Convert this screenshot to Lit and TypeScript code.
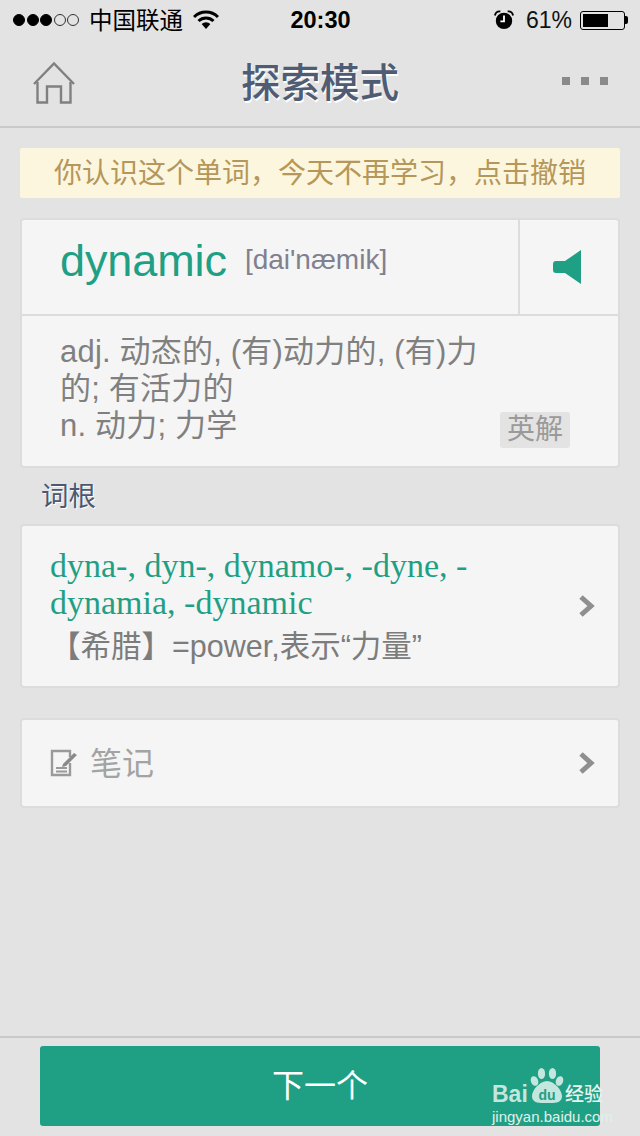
import { LitElement, html, css } from "lit";
import { customElement } from "lit/decorators.js";

const chev = html`<svg class="chev" width="18" height="24" viewBox="0 0 18 24"><path d="M3 3 L13 12 L3 21" fill="none" stroke="#8f8f8f" stroke-width="5"/></svg>`;

@customElement("app-root")
export class AppRoot extends LitElement {
  static styles = css`
    :host { display: block; position: relative; width: 640px; height: 1136px; overflow: hidden; background: #e3e3e3;
      font-family: "Liberation Sans", "Noto Sans CJK SC", sans-serif; }
    .page { display: flex; flex-direction: column; height: 1136px; }
    .status { height: 40px; flex: none; display: grid; grid-template-columns: 1fr auto 1fr; align-items: center; color: #000; font-size: 24px; padding: 0 12px 0 13px; }
    .status-l { display: flex; align-items: center; }
    .dots { display: flex; gap: 1.5px; margin-right: 10px; }
    .dot { box-sizing: border-box; width: 12px; height: 12px; border-radius: 50%; background: #000; border: 1px solid #000; }
    .dot.off { background: none; border-color: #333; }
    .carrier { font-size: 23.5px; margin-right: 10px; padding-bottom: 3px; }
    .time { font-size: 23.5px; font-weight: 700; }
    .status-r { display: flex; justify-content: flex-end; align-items: center; gap: 8px; font-size: 23px; color: #111; }
    .alarm { margin-right: 4px; }
    .batt { display: flex; align-items: center; }
    .batt-body { box-sizing: content-box; width: 39px; height: 13px; border: 1px solid #000; border-radius: 3px; padding: 2px; display: flex; }
    .batt-fill { width: 25px; background: #000; }
    .batt-tip { width: 3px; height: 8px; background: #000; border-radius: 0 2px 2px 0; }
    .nav { height: 86px; flex: none; border-bottom: 2px solid #c9c9c9; display: grid; grid-template-columns: 1fr auto 1fr; align-items: center; padding: 0 32px; }
    .nav-home { display: flex; }
    .title { font-size: 39.5px; font-weight: 500; color: #505c74; text-shadow: 1px 2px 0 #fff; padding-bottom: 8px; }
    .more { display: flex; justify-content: flex-end; gap: 11px; padding-bottom: 4px; }
    .more i { width: 8px; height: 8px; background: #8a8a8a; display: block; }
    .content { flex: 1; padding: 20px 20px 0; display: flex; flex-direction: column; }
    .banner { height: 50px; box-sizing: border-box; padding-bottom: 4px; background: #fcf6de; border-radius: 2px; color: #b5975a; font-size: 28px; display: flex; align-items: center; justify-content: center; }
    .card { background: #f5f5f5; border: 2px solid #dcdcdc; border-radius: 4px; }
    .word-card { margin-top: 20px; height: 250px; box-sizing: border-box; display: flex; flex-direction: column; }
    .word-head { height: 94px; flex: none; display: flex; border-bottom: 2px solid #dcdcdc; }
    .word-main { flex: 1; display: flex; align-items: flex-start; padding-left: 38px; gap: 18px; }
    .word { font-size: 45px; letter-spacing: -0.1px; color: #1f9f84; margin-top: 15px; }
    .phon { font-size: 28px; color: #80808f; margin-top: 24px; }
    .speak { width: 98px; flex: none; border-left: 2px solid #dcdcdc; display: flex; align-items: center; justify-content: center; }
    .speak svg { margin-right: 4px; }
    .defs { flex: 1; position: relative; padding: 17px 120px 0 38px; font-size: 31px; letter-spacing: 0.2px; line-height: 37px; color: #808080; }
    .en-btn { position: absolute; right: 48px; bottom: 18px; width: 70px; height: 36px; background: #e3e3e3; border-radius: 3px; color: #9a9a9a; font-size: 28px; letter-spacing: 0; line-height: 36px; text-align: center; }
    .label { margin: 11px 0 9px 21px; height: 36px; line-height: 36px; font-size: 27.5px; color: #4c5870; text-shadow: 1px 1px 0 #fff; }
    .root-card { height: 164px; box-sizing: border-box; display: flex; align-items: center; padding: 0 22px 0 28px; }
    .root-main { flex: 1; padding-top: 2px; }
    .root-words { font-family: "Liberation Serif", serif; font-size: 34px; line-height: 37px; color: #1f9f84; width: 470px; }
    .root-mean { font-size: 30.5px; line-height: 44px; color: #7c7c7c; padding-top: 3px; }
    .note-card { margin-top: 30px; height: 90px; box-sizing: border-box; display: flex; align-items: center; padding: 0 22px 0 28px; }
    .note-main { flex: 1; display: flex; align-items: center; gap: 12px; font-size: 32px; color: #a3a3a3; }
    .note-main span { padding-bottom: 5px; }
    .footer { height: 100px; flex: none; box-sizing: border-box; border-top: 2px solid #c9c9c9; padding: 8px 40px 10px; }
    .next { height: 80px; box-sizing: border-box; padding-bottom: 7px; background: #1f9f84; border-radius: 3px; color: #fff; font-size: 32px; display: flex; align-items: center; justify-content: center; }
    .wm { position: absolute; left: 491px; top: 1066px; width: 116px; height: 60px; color: #c3e6de; }
    .wm-bai { position: absolute; left: 1px; top: 15px; font-weight: 700; font-size: 23px; }
    .wm-paw { position: absolute; left: 39px; top: 2px; }
    .wm-cn { position: absolute; left: 74px; top: 13px; font-size: 19px; font-weight: 500; color: #e6f4f0; white-space: nowrap; }
    .wm-url { position: absolute; left: 1px; top: 42px; font-size: 15px; color: #e0f1ec; white-space: nowrap; }
  `;

  render() {
    return html`
      <div class="page">
        <div class="status">
          <div class="status-l">
            <div class="dots">
              <span class="dot"></span><span class="dot"></span><span class="dot"></span>
              <span class="dot off"></span><span class="dot off"></span>
            </div>
            <span class="carrier">中国联通</span>
            <svg width="26" height="20" viewBox="0 0 26 20">
              <path d="M1 7 A17 17 0 0 1 25 7" fill="none" stroke="#000" stroke-width="3"/>
              <path d="M5.5 11 A11 11 0 0 1 20.5 11" fill="none" stroke="#000" stroke-width="3"/>
              <path d="M13 19 L8.6 14 A6.5 6.5 0 0 1 17.4 14 Z" fill="#000"/>
            </svg>
          </div>
          <div class="time">20:30</div>
          <div class="status-r">
            <svg class="alarm" width="20" height="20" viewBox="0 0 22 22">
              <circle cx="11" cy="12" r="9" fill="#000"/>
              <path d="M11 6 V12.5 H7" fill="none" stroke="#fff" stroke-width="2"/>
              <path d="M1 6 Q2 1 7 1.5 M21 6 Q20 1 15 1.5" fill="none" stroke="#000" stroke-width="2"/>
            </svg>
            <span>61%</span>
            <div class="batt">
              <div class="batt-body"><div class="batt-fill"></div></div>
              <div class="batt-tip"></div>
            </div>
          </div>
        </div>
        <div class="nav">
          <div class="nav-home">
            <svg width="44" height="44" viewBox="0 0 44 44">
              <path d="M2 23 L22 2.5 L42 23" fill="none" stroke="#808080" stroke-width="2.4"/>
              <path d="M5.5 21 V41.5 H15 V25.5 H29 V41.5 H38.5 V21" fill="none" stroke="#808080" stroke-width="2.4"/>
            </svg>
          </div>
          <div class="title">探索模式</div>
          <div class="more"><i></i><i></i><i></i></div>
        </div>
        <div class="content">
          <div class="banner">你认识这个单词，今天不再学习，点击撤销</div>
          <div class="card word-card">
            <div class="word-head">
              <div class="word-main">
                <span class="word">dynamic</span>
                <span class="phon">[dai'næmik]</span>
              </div>
              <div class="speak">
                <svg width="28" height="34" viewBox="0 0 28 34"><path d="M28 0 V34 L12 23 H3 Q0 23 0 20 V14 Q0 11 3 11 H12 Z" fill="#1f9f84"/></svg>
              </div>
            </div>
            <div class="defs">
              adj. 动态的, (有)动力的, (有)力的; 有活力的<br />n. 动力; 力学
              <div class="en-btn">英解</div>
            </div>
          </div>
          <div class="label">词根</div>
          <div class="card root-card">
            <div class="root-main">
              <div class="root-words">dyna-, dyn-, dynamo-, -dyne, -dynamia, -dynamic</div>
              <div class="root-mean">【希腊】=power,表示“力量”</div>
            </div>
            ${chev}
          </div>
          <div class="card note-card">
            <div class="note-main">
              <svg width="28" height="28" viewBox="0 0 28 28">
                <path d="M20 8 V2 H2 V26 H20 V14" fill="none" stroke="#9a9a9a" stroke-width="2.4"/>
                <path d="M6 19 H17 M6 22.5 H17" stroke="#9a9a9a" stroke-width="2"/>
                <path d="M13 15 L24 4 L27 6 L16 17 L12 18 Z" fill="#8a8a8a"/>
              </svg>
              <span>笔记</span>
            </div>
            ${chev}
          </div>
        </div>
        <div class="footer"><div class="next">下一个</div></div>
      </div>
      <div class="wm">
        <span class="wm-bai">Bai</span>
        <svg class="wm-paw" width="34" height="36" viewBox="0 0 34 36">
          <ellipse cx="4.5" cy="13" rx="3.6" ry="5" fill="#c3e6de" transform="rotate(-20 4.5 13)"/>
          <ellipse cx="11.5" cy="5.5" rx="3.6" ry="5.5" fill="#c3e6de"/>
          <ellipse cx="22.5" cy="5.5" rx="3.6" ry="5.5" fill="#c3e6de"/>
          <ellipse cx="29.5" cy="13" rx="3.6" ry="5" fill="#c3e6de" transform="rotate(20 29.5 13)"/>
          <path d="M17 13 C10 13 2 22 2 28 C2 36 11 35 17 35 C23 35 32 36 32 28 C32 22 24 13 17 13 Z" fill="#c3e6de"/>
          <text x="17" y="32" font-size="14" font-weight="700" text-anchor="middle" fill="#1f9f84" font-family="Liberation Sans">du</text>
        </svg>
        <span class="wm-cn">经验</span>
        <div class="wm-url">jingyan.baidu.com</div>
      </div>
    `;
  }
}
